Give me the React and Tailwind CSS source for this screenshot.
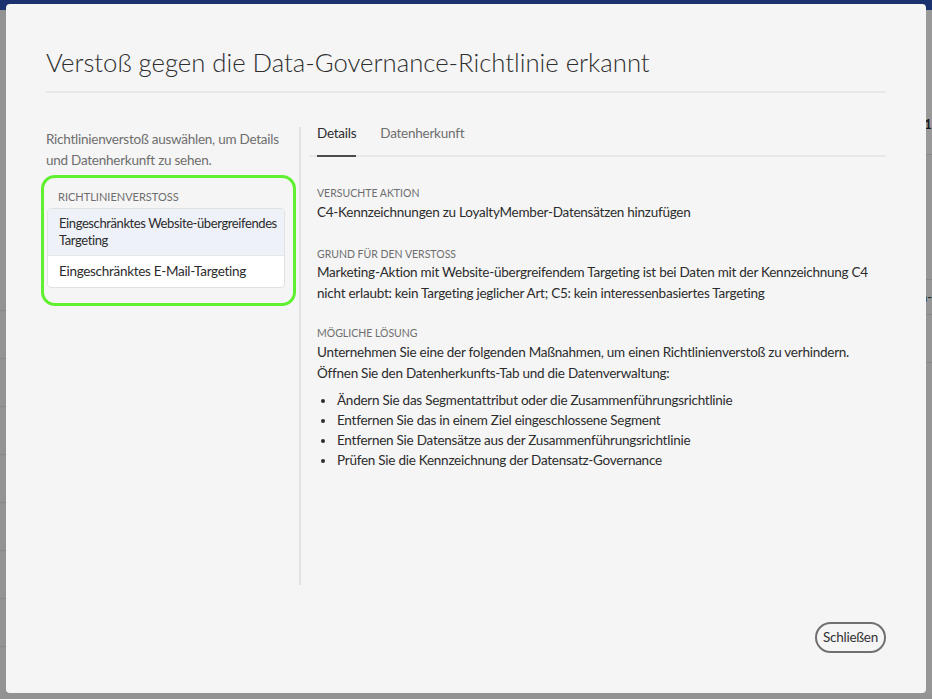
export default function App() {
  const bullets = [
    "Ändern Sie das Segmentattribut oder die Zusammenführungsrichtlinie",
    "Entfernen Sie das in einem Ziel eingeschlossene Segment",
    "Entfernen Sie Datensätze aus der Zusammenführungsrichtlinie",
    "Prüfen Sie die Kennzeichnung der Datensatz-Governance",
  ];

  return (
    <div
      className="relative h-[699px] w-[932px] overflow-hidden bg-[#939393]"
      style={{ fontFamily: "Lato, 'Open Sans', sans-serif" }}
    >
      {/* dimmed page behind the dialog */}
      <div className="h-[10px] bg-[#1c326e]" />
      <div className="flex">
        <div className="w-[805px]">
          <div className="h-[300px]" />
          {[0, 1, 2, 3, 4, 5, 6, 7].map((i) => (
            <div key={i} className="h-[48px] border-t border-[#888888]" />
          ))}
        </div>
        <div className="flex-1 bg-[#969696] text-[13px] text-[#1a1a1a]">
          <div className="h-[145px] border-b border-[#888888] bg-[#999999] pt-[105px] pl-[119px] font-bold">o1</div>
          <div className="h-[125px] border-b border-[#888888] pt-[66px] pl-[122px]">a</div>
          <div className="h-[35px] border-b border-[#888888] pt-[8px] pl-[122px]">n-</div>
          <div className="h-[48px] border-b border-[#888888]" />
        </div>
      </div>

      {/* dialog */}
      <div className="absolute left-[6px] top-[4px] flex h-[689px] w-[920px] flex-col rounded bg-[#f5f5f5] px-[40px] pt-[41px] pb-[40px] tracking-[-0.25px]">
        <h1 className="text-[25.7px] font-light leading-[34px] tracking-normal text-[#2e2e2e]">
          Verstoß gegen die Data-Governance-Richtlinie erkannt
        </h1>
        <div className="mt-[12px] h-[2px] bg-[#e8e8e8]" />

        <div className="mt-[34px] flex flex-1 items-start">
          {/* left column */}
          <div className="h-[458px] w-[255px] border-r-2 border-[#e1e1e1] pt-[2px] pr-[14px]">
            <p className="text-[13.5px] leading-[21px] text-[#6e6e6e]">
              Richtlinienverstoß auswählen, um Details und Datenherkunft zu sehen.
            </p>
            <div className="relative mt-[19px] ml-px">
              <div className="pointer-events-none absolute -top-[15px] -left-[6px] -right-[11px] -bottom-[18px] rounded-[14px] border-[3px] border-[#5ff12f]" />
              <div className="pl-[11px] text-[11px] leading-[14px] tracking-normal text-[#6e6e6e] uppercase">
                Richtlinienverstoss
              </div>
              <div className="mt-[4px] overflow-hidden rounded border border-[#e1e1e1] bg-white text-[13.5px] leading-[17px] tracking-[-0.3px] text-[#2c2c2c]">
                <div className="bg-[#eef1f8] py-[6px] pr-[2px] pl-[11px] text-[13px] tracking-[-0.4px] whitespace-nowrap">
                  Eingeschränktes Website-übergreifendes
                  <br />
                  Targeting
                </div>
                <div className="border-t border-[#e8e8e8] px-[11px] py-[7px]">
                  Eingeschränktes E-Mail-Targeting
                </div>
              </div>
            </div>
          </div>

          {/* right column */}
          <div className="flex h-full flex-1 flex-col pl-[8px]">
            <div className="-mt-[3px] flex border-b-2 border-[#e8e8e8]">
              <div className="ml-[8px] -mb-[2px] border-b-2 border-[#4b4b4b] pb-[13px] text-[13.5px] leading-[18px] text-[#2c2c2c]">
                Details
              </div>
              <div className="ml-[24px] pb-[13px] text-[13.5px] leading-[18px] text-[#6e6e6e]">
                Datenherkunft
              </div>
            </div>

            <div className="pl-[8px] pt-[29px] text-[13.5px] leading-[20px] text-[#2c2c2c]">
              <div className="text-[10.5px] leading-[14px] tracking-normal text-[#6e6e6e] uppercase">Versuchte Aktion</div>
              <p className="mt-[2px]">C4-Kennzeichnungen zu LoyaltyMember-Datensätzen hinzufügen</p>

              <div className="mt-[25px] text-[10.5px] leading-[14px] tracking-normal text-[#6e6e6e] uppercase">Grund für den Verstoss</div>
              <p className="mt-[1px] leading-[21px]">
                Marketing-Aktion mit Website-übergreifendem Targeting ist bei Daten mit der Kennzeichnung C4
                nicht erlaubt: kein Targeting jeglicher Art; C5: kein interessenbasiertes Targeting
              </p>

              <div className="mt-[22px] text-[10.5px] leading-[14px] tracking-normal text-[#6e6e6e] uppercase">Mögliche Lösung</div>
              <p className="mt-[2px] leading-[20.5px]">
                Unternehmen Sie eine der folgenden Maßnahmen, um einen Richtlinienverstoß zu verhindern.
                Öffnen Sie den Datenherkunfts-Tab und die Datenverwaltung:
              </p>
              <ul className="mt-[7px] list-disc pl-[19px]">
                {bullets.map((b) => (
                  <li key={b} className="pl-[1px]">{b}</li>
                ))}
              </ul>
            </div>

            <div className="mt-auto flex justify-end">
              <button className="h-[31px] rounded-full border-2 border-[#707070] px-[6px] text-[13.5px] text-[#323232]">
                Schließen
              </button>
            </div>
          </div>
        </div>
      </div>
    </div>
  );
}
